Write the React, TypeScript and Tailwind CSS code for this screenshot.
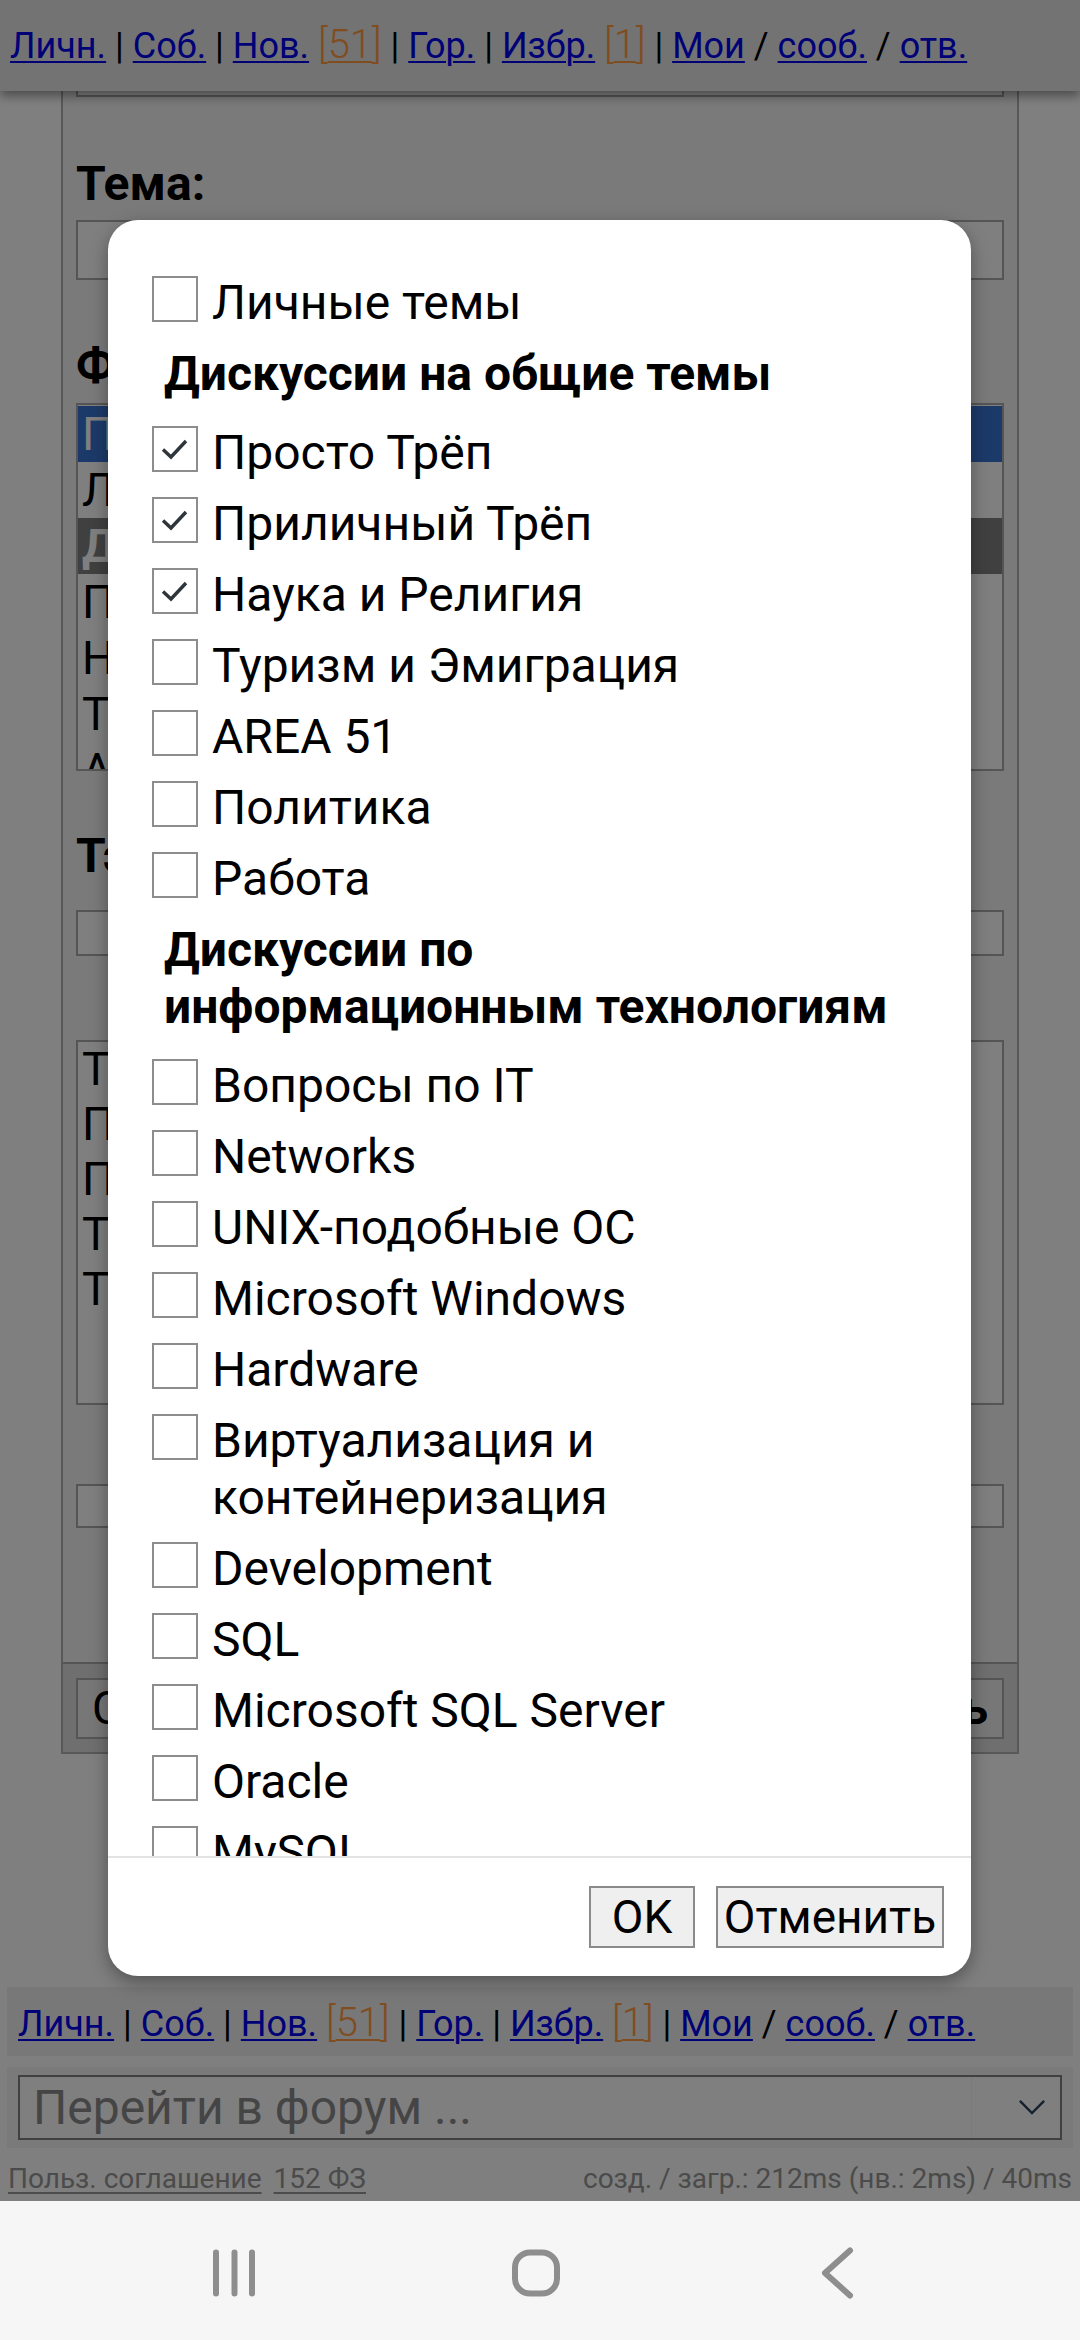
import React from "react";

type Row =
  | { kind: "h"; lines: string[] }
  | { kind: "i"; lines: string[]; checked?: boolean };

const rows: Row[] = [
  { kind: "i", lines: ["Личные темы"] },
  { kind: "h", lines: ["Дискуссии на общие темы"] },
  { kind: "i", lines: ["Просто Трёп"], checked: true },
  { kind: "i", lines: ["Приличный Трёп"], checked: true },
  { kind: "i", lines: ["Наука и Религия"], checked: true },
  { kind: "i", lines: ["Туризм и Эмиграция"] },
  { kind: "i", lines: ["AREA 51"] },
  { kind: "i", lines: ["Политика"] },
  { kind: "i", lines: ["Работа"] },
  { kind: "h", lines: ["Дискуссии по", "информационным технологиям"] },
  { kind: "i", lines: ["Вопросы по IT"] },
  { kind: "i", lines: ["Networks"] },
  { kind: "i", lines: ["UNIX-подобные ОС"] },
  { kind: "i", lines: ["Microsoft Windows"] },
  { kind: "i", lines: ["Hardware"] },
  { kind: "i", lines: ["Виртуализация и", "контейнеризация"] },
  { kind: "i", lines: ["Development"] },
  { kind: "i", lines: ["SQL"] },
  { kind: "i", lines: ["Microsoft SQL Server"] },
  { kind: "i", lines: ["Oracle"] },
  { kind: "i", lines: ["MySQL"] },
  { kind: "i", lines: ["PostgreSQL"] },
  { kind: "i", lines: ["Сертификация и обучение"] },
];

function Lines({ lines }: { lines: string[] }) {
  return (
    <>
      {lines.map((l, i) => (
        <React.Fragment key={i}>
          {i > 0 && <br />}
          {l}
        </React.Fragment>
      ))}
    </>
  );
}

function Box({ checked }: { checked?: boolean }) {
  return (
    <span className="mt-[2px] flex h-[46px] w-[46px] shrink-0 items-center justify-center border-2 border-[#8d8d8d] bg-white">
      {checked && (
        <svg viewBox="0 0 42 42" className="h-[42px] w-[42px]">
          <path d="M9 21.5 L17 29 L32 13" fill="none" stroke="#2e353b" strokeWidth="3.4" strokeLinejoin="miter" />
        </svg>
      )}
    </span>
  );
}

function NavLinks() {
  const link = "text-[#0000ee] underline decoration-[2px] underline-offset-[3px]";
  const num = "text-[40px] font-light text-[#ff9a40]";
  return (
    <div className="whitespace-nowrap font-['Roboto',sans-serif] text-[36px] leading-none text-black">
      <a className={link}>Личн.</a>
      {" | "}
      <a className={link}>Соб.</a>
      {" | "}
      <a className={link}>Нов.</a>{" "}
      <span className={num}>
        [<span className="underline decoration-[2px] underline-offset-[3px]">51</span>]
      </span>
      {" | "}
      <a className={link}>Гор.</a>
      {" | "}
      <a className={link}>Избр.</a>{" "}
      <span className={num}>
        [<span className="underline decoration-[2px] underline-offset-[3px]">1</span>]
      </span>
      {" | "}
      <a className={link}>Мои</a>
      {" / "}
      <a className={link}>сооб.</a>
      {" / "}
      <a className={link}>отв.</a>
    </div>
  );
}

function Page() {
  const listRows = [
    { t: "Просто Трёп", cls: "bg-[#3874d2] text-white" },
    { t: "Личные темы", cls: "bg-white text-black" },
    { t: "Дискуссии на общие темы", cls: "bg-[#808080] text-white font-bold" },
    { t: "Приличный Трёп", cls: "bg-white text-black" },
    { t: "Наука и Религия", cls: "bg-white text-black" },
    { t: "Туризм и Эмиграция", cls: "bg-white text-black" },
    { t: "AREA 51", cls: "bg-white text-black" },
  ];
  return (
    <div className="flex flex-col">
      <div className="ml-[61px] flex h-[1754px] w-[958px] flex-col border-x-2 border-b-2 border-[#b0b0b0] bg-[#f4f4f4]">
        <div className="flex flex-col px-[13px]">
          <div className="mt-[30px] h-[67px] border-2 border-[#aaaaaa] bg-white" />
          <div className="mt-[57px] h-[60px] text-[48px] font-bold leading-[60px]">Тема:</div>
          <div className="mt-[6px] h-[60px] border-2 border-[#aaaaaa] bg-white" />
          <div className="mt-[56px] h-[60px] text-[48px] font-bold leading-[60px]">Форум:</div>
          <div className="mt-[7px] flex h-[368px] flex-col overflow-hidden border-2 border-[#aaaaaa] bg-white py-[1px]">
            {listRows.map((r, i) => (
              <div key={i} className={`h-[56px] shrink-0 px-[4px] text-[46px] leading-[56px] ${r.cls}`}>
                {r.t}
              </div>
            ))}
          </div>
          <div className="mt-[55px] h-[60px] text-[48px] font-bold leading-[60px]">Тэги:</div>
          <div className="mt-[24px] h-[46px] border-2 border-[#aaaaaa] bg-white" />
          <div className="mt-[84px] flex h-[365px] flex-col border-2 border-[#aaaaaa] bg-white px-[4px] text-[46px] leading-[55px]">
            <div>Текст сообщения</div>
            <div>Просто Трёп</div>
            <div>Приличный Трёп</div>
            <div>Туризм</div>
            <div>Тема</div>
          </div>
          <div className="mt-[79px] h-[44px] border-2 border-[#aaaaaa] bg-white" />
        </div>
        <div className="mt-[134px] flex flex-1 items-start justify-between border-t-2 border-[#aaaaaa] bg-[#dedede] px-[13px] pt-[14px]">
          <div className="flex h-[61px] w-[420px] items-center border-2 border-[#aaaaaa] bg-[#efefef] px-[14px] text-[46px]">
            Сохранить
          </div>
          <div className="flex h-[61px] w-[420px] items-center justify-end border-2 border-[#aaaaaa] bg-[#efefef] px-[14px] text-[46px] font-bold">
            Отправить
          </div>
        </div>
      </div>

      <div className="mx-[7px] mt-[233px] flex h-[69px] items-center bg-[#f0f0f0] pl-[11px] pt-[2px]">
        <NavLinks />
      </div>

      <div className="mx-[7px] mt-[11px] flex h-[81px] items-center bg-[#f4f4f4] px-[11px]">
        <div className="flex h-[65px] flex-1 items-center border-2 border-[#808080] bg-white">
          <span className="flex-1 pl-[13px] text-[48px] leading-none text-[#8a8a8a]">Перейти в форум ...</span>
          <span className="flex h-full w-[89px] items-center justify-end border-l border-[#f4f4f4] pr-[14px]">
            <svg viewBox="0 0 30 18" className="h-[17px] w-[28px]">
              <path d="M2 2 L15 15 L28 2" fill="none" stroke="#2a4258" strokeWidth="2.6" />
            </svg>
          </span>
        </div>
      </div>

      <div className="flex h-[53px] items-center justify-between px-[8px] pt-[8px] text-[28px] leading-none text-[#969696]">
        <div className="flex gap-[12px]">
          <a className="underline decoration-[2px] underline-offset-[4px]">Польз. соглашение</a>
          <a className="underline decoration-[2px] underline-offset-[4px]">152 ФЗ</a>
        </div>
        <div>созд. / загр.: 212ms (нв.: 2ms) / 40ms</div>
      </div>
    </div>
  );
}

function Dialog() {
  return (
    <div className="absolute left-[108px] top-[220px] flex h-[1756px] w-[863px] flex-col overflow-hidden rounded-[30px] bg-white shadow-[0_6px_18px_rgba(0,0,0,0.35)]">
      <div className="h-[1636px] shrink-0 overflow-hidden pt-[47px]">
        {rows.map((r, i) =>
          r.kind === "h" ? (
            <div key={i} className="pb-[15px] pl-[56px] pr-[30px] pt-[7px] text-[48px] font-bold leading-[57px] text-black">
              <Lines lines={r.lines} />
            </div>
          ) : (
            <div key={i} className="flex items-start py-[7px] pl-[44px] pr-[30px]">
              <Box checked={r.checked} />
              <span className="ml-[14px] whitespace-nowrap text-[48px] leading-[57px] text-black">
                <Lines lines={r.lines} />
              </span>
            </div>
          )
        )}
      </div>
      <div className="h-[2px] shrink-0 bg-[#e3e3e3]" />
      <div className="flex justify-end gap-[21px] pr-[27px] pt-[28px]">
        <button className="flex h-[62px] w-[106px] items-center justify-center border-2 border-[#8a8a8a] bg-[#efefef] text-[46px] leading-none text-black">
          OK
        </button>
        <button className="flex h-[62px] w-[228px] items-center justify-center border-2 border-[#8a8a8a] bg-[#efefef] text-[46px] leading-none text-black">
          Отменить
        </button>
      </div>
    </div>
  );
}

function SystemNav() {
  return (
    <div className="flex h-[139px] items-center gap-[242px] bg-[#f6f6f6] pl-[204px] pt-[4px]">
      <svg viewBox="0 0 60 60" className="h-[60px] w-[60px]">
        <g stroke="#8e8e8e" strokeWidth="6" strokeLinecap="round">
          <line x1="12" y1="9.5" x2="12" y2="50.5" />
          <line x1="30.5" y1="9.5" x2="30.5" y2="50.5" />
          <line x1="48" y1="9.5" x2="48" y2="50.5" />
        </g>
      </svg>
      <svg viewBox="0 0 60 60" className="h-[60px] w-[60px]">
        <rect x="9" y="9.5" width="42" height="41" rx="15" fill="none" stroke="#8e8e8e" strokeWidth="6" />
      </svg>
      <svg viewBox="0 0 60 60" className="h-[60px] w-[60px]">
        <path d="M42 7.5 L17 30 L42 52.5" fill="none" stroke="#8e8e8e" strokeWidth="6" strokeLinecap="round" strokeLinejoin="round" />
      </svg>
    </div>
  );
}

export default function App() {
  return (
    <div className="relative h-[2340px] w-[1080px] overflow-hidden bg-white font-['Roboto',sans-serif] text-black">
      <div className="relative h-[2201px] overflow-hidden">
        <Page />
        <div className="absolute left-0 top-0 flex h-[91px] w-full items-center bg-[#e6e6e6] pb-[2px] pl-[10px] shadow-[0_5px_10px_rgba(0,0,0,0.4)]">
          <NavLinks />
        </div>
        <div className="absolute inset-0 bg-black/50" />
        <Dialog />
      </div>
      <SystemNav />
    </div>
  );
}
